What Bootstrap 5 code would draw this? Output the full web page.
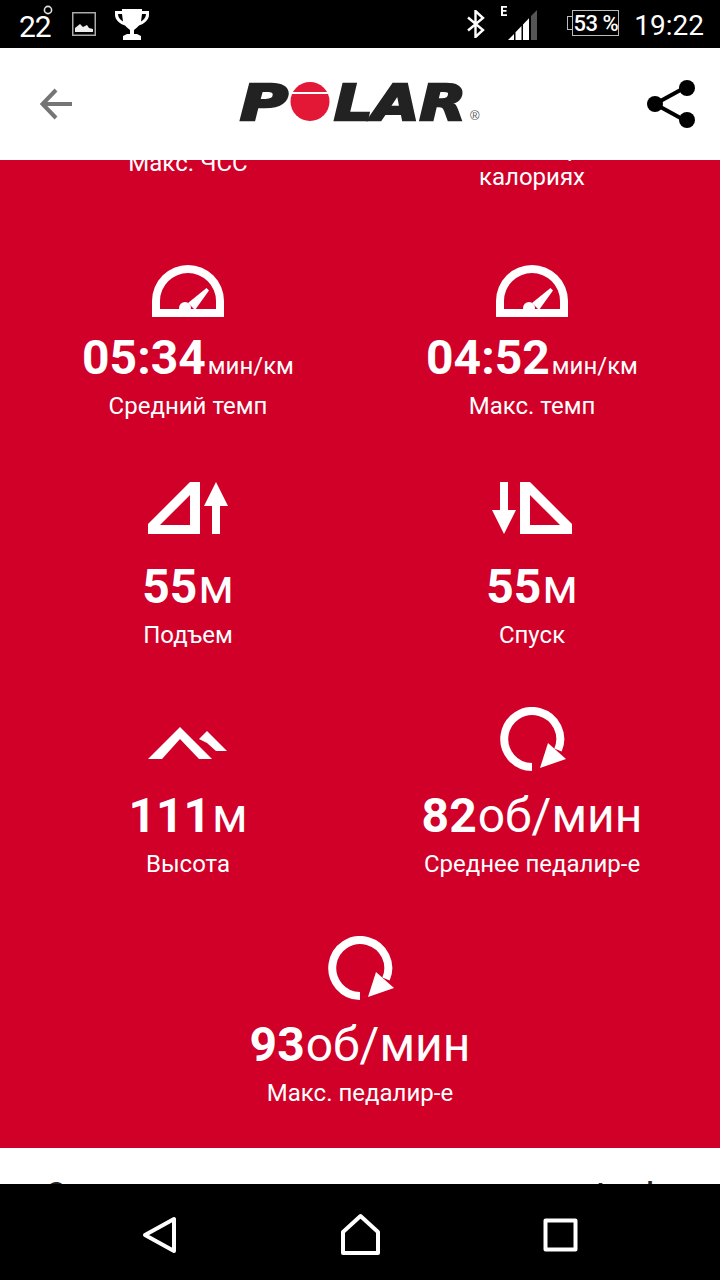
<!DOCTYPE html>
<html lang="ru">

<head>
  <meta charset="UTF-8">
  <meta name="viewport" content="width=device-width, initial-scale=1.0">
  <title>Polar - Результаты</title>
  <link rel="stylesheet" href="https://cdn.jsdelivr.net/npm/bootstrap@5.3.0/dist/css/bootstrap.min.css">
  <style>
    body {
      width: 720px;
      height: 1280px;
      overflow: hidden;
      font-family: Roboto, "Liberation Sans", sans-serif;
      background: #000;
    }

    .status-bar {
      height: 48px;
      color: #fff;
      padding: 0 16px 0 19px;
    }

    .temp {
      font-size: 30px;
      line-height: 48px;
      width: 53px;
      padding-top: 5px;
      letter-spacing: -1px;
    }

    .trophy {
      margin-left: 19px;
    }

    .clock {
      font-size: 28px;
      line-height: 48px;
      padding-top: 3px;
      margin-left: 15px;
    }

    .battery-wrap {
      margin-left: 30px;
      margin-top: -2px;
    }

    .battery-text {
      font-size: 22px;
      font-weight: 500;
      line-height: 25px;
      border: 1px solid #bbb;
      width: 47px;
      height: 26px;
      text-align: center;
      white-space: nowrap;
      letter-spacing: -0.5px;
    }

    .battery-nub {
      width: 5px;
      height: 14px;
      border: 1px solid #bbb;
      border-right: 0;
    }

    .app-header {
      height: 112px;
      background: #fff;
      padding: 0 24px 0 40px;
    }

    .scroll-area {
      height: 1024px;
      overflow: hidden;
      background: #fff;
    }

    .stats-panel {
      background: #d00028;
      color: #fff;
      margin-top: -26px;
      padding: 0 16px 40px;
    }

    .stat-grid {
      row-gap: 58px;
    }

    .stat-cell {
      text-align: center;
    }

    .stat-icon {
      display: block;
      margin: -1px auto 0;
      height: 72px;
    }

    .stat-value {
      font-size: 48px;
      font-weight: 700;
      line-height: 64px;
      height: 64px;
      margin-top: 5px;
      white-space: nowrap;
    }

    .unit-big {
      font-size: 48px;
      font-weight: 400;
      line-height: 1;
      margin-left: 1px;
    }

    .unit-small {
      font-size: 24px;
      font-weight: 400;
      line-height: 1;
      margin-left: 2px;
    }

    .stat-label {
      font-size: 24px;
      line-height: 30px;
      margin-top: 1px;
    }

    .top-label {
      font-size: 24px;
      line-height: 29px;
      height: 58px;
    }

    .next-section {
      color: #222;
      font-size: 30px;
      line-height: 40px;
      padding: 25px 66px 0 46px;
      font-weight: 500;
      word-spacing: 33px;
    }

    .nav-bar {
      height: 96px;
      background: #000;
    }
  </style>
</head>

<body>
  <div class="status-bar d-flex align-items-center justify-content-between">
    <div class="d-flex align-items-center">
      <div class="temp position-relative">22<svg class="position-absolute top-0 start-0" width="53" height="48">
          <circle cx="29" cy="12" r="3.6" fill="none" stroke="#ddd" stroke-width="1.6" />
        </svg></div>
      <svg width="24" height="24" viewBox="0 0 24 24">
        <rect x=".75" y=".75" width="22.5" height="22.5" fill="none" stroke="#aaa" stroke-width="1.5" />
        <path d="M3 20v-4l5-4 3 3 4-2 2 3 4 1v3z" fill="#eee" />
      </svg>
      <svg class="trophy" width="34" height="31" viewBox="0 0 34 31">
        <path fill="#fff" fill-rule="evenodd" d="M7 0H27V2H34V6C34 11 29 15 24 16.500 22 19 20 20 19 21V25H22L26 27V31H8V27L12 25H15V21C14 20 12 19 10 16.500 5 15 0 11 0 6V2H7ZM3 5C3 8 5 11 8 12.500L7 5ZM31 5H27L26 12.500C29 11 31 8 31 5Z" />
      </svg>
    </div>
    <div class="d-flex align-items-center">
      <svg width="18" height="28" viewBox="0 0 18 28">
        <path d="M1 7.500 16 20l-7.500 7V1L16 8 1 20.500" fill="none" stroke="#fff" stroke-width="2.400" />
      </svg>
      <svg class="ms-3" width="36" height="36" viewBox="0 0 36 36">
        <path d="M0 0h6v1.800H2v2.300h3.500v1.700H2v2.400h4V10H0z" fill="#fff" />
        <path d="M7 34l6-6v6zM14.500 34v-7.800l6-6.200v14zM22 34V18.500l6-6.200V34z" fill="#fff" />
        <path d="M30 34V10l6-6v30z" fill="#555" />
      </svg>
      <div class="battery-wrap d-flex align-items-center">
        <div class="battery-nub"></div>
        <div class="battery-text">53 %</div>
      </div>
      <div class="clock">19:22</div>
    </div>
  </div>

  <div class="app-header d-flex align-items-center justify-content-between">
    <svg width="32" height="32" viewBox="0 0 32 32">
      <path d="M32 16H3M16 2 2.500 16 16 30" fill="none" stroke="#757575" stroke-width="4" />
    </svg>
    <svg width="244" height="44" viewBox="0 0 244 44" class="ms-1">
      <text x="1" y="38" textLength="48" lengthAdjust="spacingAndGlyphs" font-family="DejaVu Sans" font-weight="700" font-style="oblique" font-size="49" fill="#222" stroke="#222" stroke-width="2.500">P</text>
      <circle cx="71" cy="19.500" r="19.500" fill="#e31837" />
      <rect x="50" y="10" width="42" height="2" fill="#fff" />
      <text x="95" y="38" textLength="132" lengthAdjust="spacingAndGlyphs" font-family="DejaVu Sans" font-weight="700" font-style="oblique" font-size="49" fill="#222" stroke="#222" stroke-width="2.500">LAR</text>
      <text x="231" y="38" font-family="Liberation Sans" font-size="13" fill="#555">®</text>
    </svg>
    <svg width="50" height="50" viewBox="0 0 50 50">
      <path d="M40 8 9 25l31 17" fill="none" stroke="#000" stroke-width="4" />
      <circle cx="41" cy="9" r="8" />
      <circle cx="9" cy="25" r="8" />
      <circle cx="41" cy="41" r="8" />
    </svg>
  </div>

  <div class="scroll-area">
    <div class="stats-panel">
      <div class="row g-0 stat-grid justify-content-center">
        <div class="col-6 stat-cell top-label d-flex align-items-center justify-content-center">Макс. ЧСС</div>
        <div class="col-6 stat-cell top-label">Доля жира<br>калориях</div>
        <div class="col-6 stat-cell">
          <svg class="stat-icon" width="72" viewBox="0 0 72 72">
            <path fill="#fff" fill-rule="evenodd" d="M0 68V52a36 36 0 0 1 72 0v16zM8 60h56v-8a28 28 0 0 0-56 0z" />
            <circle cx="33" cy="59" r="6" fill="#fff" />
            <path fill="#fff" d="M36 54 54.500 39 57 41.500 43 61z" />
          </svg>
          <div class="stat-value">05:34<span class="unit-small">мин/км</span></div>
          <div class="stat-label">Средний темп</div>
        </div>
        <div class="col-6 stat-cell">
          <svg class="stat-icon" width="72" viewBox="0 0 72 72">
            <path fill="#fff" fill-rule="evenodd" d="M0 68V52a36 36 0 0 1 72 0v16zM8 60h56v-8a28 28 0 0 0-56 0z" />
            <circle cx="33" cy="59" r="6" fill="#fff" />
            <path fill="#fff" d="M36 54 54.500 39 57 41.500 43 61z" />
          </svg>
          <div class="stat-value">04:52<span class="unit-small">мин/км</span></div>
          <div class="stat-label">Макс. темп</div>
        </div>
        <div class="col-6 stat-cell">
          <svg class="stat-icon" width="88" viewBox="0 0 88 72">
            <path fill="#fff" fill-rule="evenodd" d="M46 4h10v52H4V46zM16 47h30V17z" />
            <path fill="#fff" d="M72 4l12 24h-8v28h-8V28h-8z" />
          </svg>
          <div class="stat-value">55<span class="unit-big">м</span></div>
          <div class="stat-label">Подъем</div>
        </div>
        <div class="col-6 stat-cell">
          <svg class="stat-icon" width="88" viewBox="0 0 88 72">
            <path fill="#fff" fill-rule="evenodd" d="M32 4h10l42 42v10H32zM42 47h30L42 17z" />
            <path fill="#fff" d="M16 56 4 32h8V4h8v28h8z" />
          </svg>
          <div class="stat-value">55<span class="unit-big">м</span></div>
          <div class="stat-label">Спуск</div>
        </div>
        <div class="col-6 stat-cell">
          <svg class="stat-icon" width="88" viewBox="0 0 88 72">
            <path fill="#fff" d="M4 52 36 20l32 32H55L36 32 18 52z" />
            <path fill="#fff" d="M55 32l8-8 20 20H72l-9-8z" />
          </svg>
          <div class="stat-value">111<span class="unit-big">м</span></div>
          <div class="stat-label">Высота</div>
        </div>
        <div class="col-6 stat-cell">
          <svg class="stat-icon" width="72" viewBox="0 0 72 72">
            <path d="M36 60A28 28 0 1 1 62 43" fill="none" stroke="#fff" stroke-width="8" />
            <path fill="#fff" d="M52 36 70 52 44 61z" />
          </svg>
          <div class="stat-value">82<span class="unit-big">об/мин</span></div>
          <div class="stat-label">Среднее педалир-е</div>
        </div>
        <div class="col-6 stat-cell">
          <svg class="stat-icon" width="72" viewBox="0 0 72 72">
            <path d="M36 60A28 28 0 1 1 62 43" fill="none" stroke="#fff" stroke-width="8" />
            <path fill="#fff" d="M52 36 70 52 44 61z" />
          </svg>
          <div class="stat-value">93<span class="unit-big">об/мин</span></div>
          <div class="stat-label">Макс. педалир-е</div>
        </div>
      </div>
    </div>
    <div class="next-section d-flex justify-content-between">
      <span>С</span>
      <span>t l</span>
    </div>
  </div>

  <div class="nav-bar position-relative">
    <svg class="position-absolute top-0 start-0" width="720" height="96" viewBox="0 0 720 96">
      <g fill="none" stroke="#fff" stroke-width="4" stroke-linejoin="round">
        <path d="M174 35v32L145 51z" />
        <path d="M343 69V48l17.500-16L378 48v21z" />
        <rect x="545.500" y="36.500" width="30" height="29" />
      </g>
    </svg>
  </div>
</body>

</html>
